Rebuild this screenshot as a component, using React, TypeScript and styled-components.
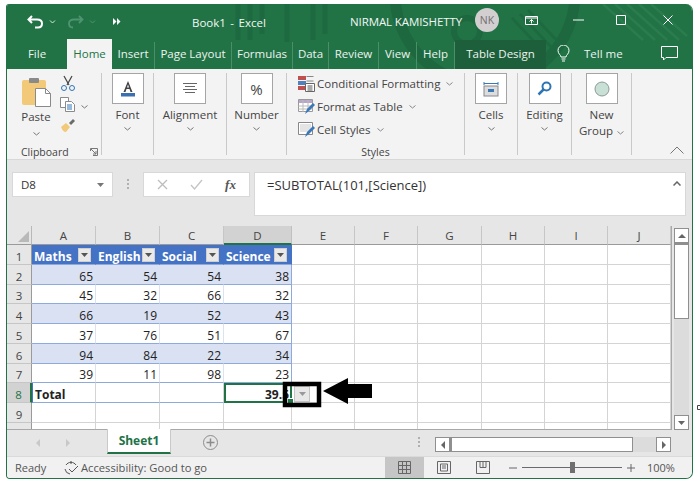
import React from "react";
import styled, { createGlobalStyle } from "styled-components";

const Global = createGlobalStyle`
  html, body { margin: 0; padding: 0; background: #fff; width: 700px; height: 483px; overflow: hidden; }
  * { box-sizing: border-box; }
`;

const Page = styled.div`
  position: relative;
  width: 700px;
  height: 483px;
  padding: 4px 7px 4px 6px;
  font-family: "Open Sans", "Noto Sans", sans-serif;
  color: #333;
`;
const Win = styled.div`
  width: 100%;
  height: 100%;
  display: flex;
  flex-direction: column;
  border: 1px solid #217346;
  border-top: none;
  border-radius: 3px 7px 7px 4px;
  overflow: hidden;
  background: #e6e6e6;
`;
const TopBand = styled.div`
  position: relative;
  background: #217346;
  height: 65px;
  flex: none;
  color: #fff;
  display: flex;
  flex-direction: column;
`;
const Pattern = styled.svg`
  position: absolute;
  left: 0;
  top: 0;
  pointer-events: none;
`;
const TitleRow = styled.div`
  position: relative;
  height: 35px;
  display: flex;
  align-items: center;
  padding-left: 20px;
`;
const Quick = styled.div`
  width: 165px;
  display: flex;
  align-items: center;
  gap: 5px;
`;
const BookTitle = styled.div`
  width: 158px;
  font-size: 11.5px;
  color: #f2f7f4;
  word-spacing: 1.5px;
  margin-top: 2px;
`;
const UserName = styled.div`
  width: 125px;
  font-size: 11.5px;
  color: #f2f7f4;
  letter-spacing: -0.1px;
`;
const Avatar = styled.div`
  width: 24px;
  height: 24px;
  border-radius: 50%;
  background: #d3cfd0;
  color: #707070;
  font-size: 10.5px;
  display: flex;
  align-items: center;
  justify-content: center;
  margin-right: 26px;
  margin-top: -3px;
`;
const WinButtons = styled.div`
  display: flex;
  align-items: center;
  gap: 32px;
  margin-top: -3px;
`;
const TabRow = styled.div`
  position: relative;
  height: 30px;
  display: flex;
  align-items: flex-end;
`;
const Tab = styled.div<{ $w: number; $active?: boolean; $contextual?: boolean; $sep?: boolean }>`
  width: ${(p) => p.$w}px;
  height: ${(p) => (p.$active ? 30 : p.$contextual ? 29 : 27)}px;
  flex: none;
  font-size: 11.5px;
  display: flex;
  align-items: center;
  justify-content: center;
  padding-bottom: ${(p) => (p.$active ? 1 : p.$contextual ? 2 : 4)}px;
  background: ${(p) => (p.$active ? "#f3f3f3" : p.$contextual ? "#1c5f3a" : "transparent")};
  color: ${(p) => (p.$active ? "#217346" : "#edf4f0")};
  border-right: ${(p) => (p.$sep ? "1px solid #4b8f6a" : "none")};
`;
const TellMe = styled.div`
  display: flex;
  align-items: center;
  gap: 14px;
  font-size: 11.5px;
  color: #edf4f0;
  height: 30px;
  padding-left: 11px;
  padding-bottom: 1px;
  width: 115px;
`;
const CommentBtn = styled.div`
  height: 30px;
  display: flex;
  align-items: center;
  padding-bottom: 1px;
`;

const Ribbon = styled.div`
  height: 91px;
  flex: none;
  background: #f3f3f3;
  border-bottom: 1px solid #d8d8d8;
  display: flex;
  padding-top: 4px;
  position: relative;
`;
const Group = styled.div<{ $w: number; $end?: boolean }>`
  width: ${(p) => p.$w}px;
  flex: none;
  height: 82px;
  border-right: ${(p) => (p.$end ? "none" : "1px solid #c9c9c9")};
  display: flex;
  flex-direction: column;
  align-items: center;
  position: relative;
`;
const BoxIcon = styled.div`
  width: 32px;
  height: 31px;
  background: #fff;
  border: 1px solid #a5a5a5;
  display: flex;
  align-items: center;
  justify-content: center;
  flex: none;
  font-size: 15px;
  color: #444;
`;
const BigLabel = styled.div`
  font-size: 11.5px;
  line-height: 16px;
  margin-top: 3px;
  text-align: center;
  color: #444;
`;
const Chev = styled.svg`
  display: block;
  margin-top: 4px;
`;
const ClipboardBody = styled.div`
  display: flex;
  width: 100%;
  height: 66px;
  padding-left: 10px;
`;
const PasteCol = styled.div`
  width: 38px;
  display: flex;
  flex-direction: column;
  align-items: center;
  padding-top: 5px;
`;
const PasteLabel = styled.div`
  font-size: 11.5px;
  line-height: 14px;
  color: #444;
  margin-top: 2px;
  margin-bottom: 4px;
`;
const SmallCol = styled.div`
  display: flex;
  flex-direction: column;
  gap: 6px;
  padding-top: 2px;
  margin-left: 5px;
`;
const CopyRow = styled.div`
  display: flex;
  align-items: center;
  gap: 6px;
`;
const GroupFoot = styled.div<{ $pad?: boolean }>`
  position: absolute;
  left: 0;
  right: 0;
  bottom: -6px;
  height: 17px;
  font-size: 10.5px;
  line-height: 17px;
  color: #444;
  text-align: center;
  display: flex;
  justify-content: ${(p) => (p.$pad ? "flex-start" : "center")};
  padding-left: ${(p) => (p.$pad ? 14 : 0)}px;
`;
const Launcher = styled.svg`
  position: absolute;
  right: 3px;
  top: 4px;
`;
const StyleList = styled.div`
  display: flex;
  flex-direction: column;
  align-items: flex-start;
  gap: 0;
  width: 100%;
  padding-left: 11px;
  margin-top: -1px;
`;
const StyleRow = styled.div`
  display: flex;
  align-items: center;
  height: 23px;
  gap: 2px;
  font-size: 11.5px;
  color: #444;
  white-space: nowrap;
`;
const Collapse = styled.svg`
  position: absolute;
  right: 2px;
  bottom: 1px;
`;

const FormulaBand = styled.div`
  height: 66px;
  flex: none;
  display: flex;
  padding: 12px 6px 0 5px;
  align-items: flex-start;
  background: #e6e6e6;
`;
const NameBox = styled.div`
  width: 101px;
  height: 25px;
  background: #fff;
  border: 1px solid #d8d8d8;
  font-size: 11.5px;
  display: flex;
  align-items: center;
  justify-content: space-between;
  padding: 0 8px;
`;
const Dots = styled.div`
  width: 30px;
  height: 25px;
  display: flex;
  align-items: center;
  justify-content: center;
`;
const FxBox = styled.div`
  width: 107px;
  height: 25px;
  background: #fff;
  border: 1px solid #d8d8d8;
  display: flex;
  align-items: center;
  justify-content: space-around;
  padding: 0 2px;
  margin-right: 4px;
`;
const FxText = styled.span`
  font-family: "Liberation Serif", serif;
  font-style: italic;
  font-size: 13px;
  font-weight: 700;
  color: #555;
`;
const FormulaInput = styled.div`
  flex: 1;
  height: 44px;
  background: #fff;
  border: 1px solid #d8d8d8;
  font-size: 13px;
  line-height: 16px;
  padding: 4px 12px;
  position: relative;
  color: #333;
`;
const FormulaUp = styled.svg`
  position: absolute;
  right: 4px;
  top: 8px;
`;

const SheetRow = styled.div`
  height: 204px;
  flex: none;
  display: flex;
  background: #e6e6e6;
`;
const Grid = styled.div`
  width: 665px;
  display: grid;
  grid-template-columns: 25px 64px 64px 64px 68px 63px 63px 64px 63px 63px 63px;
  grid-template-rows: 19px 20px 20px 19px 20px 20px 20px 19px 20px 20px 7px;
  background: #fff;
  border-right: 1px solid #a8a8a8;
  border-bottom: 1px solid #a8a8a8;
  overflow: hidden;
`;
const Corner = styled.div`
  background: #e6e6e6;
  border-right: 1px solid #b8b8b8;
  border-bottom: 1px solid #9a9a9a;
  position: relative;
  &::after {
    content: "";
    position: absolute;
    right: 2px;
    bottom: 2px;
    border-style: solid;
    border-width: 0 0 11px 11px;
    border-color: transparent transparent #b9b9b9 transparent;
  }
`;
const ColHead = styled.div<{ $sel?: boolean }>`
  background: ${(p) => (p.$sel ? "#d2d2d2" : "#e6e6e6")};
  border-right: 1px solid ${(p) => (p.$sel ? "#c0c0c0" : "#c6c6c6")};
  border-bottom: ${(p) => (p.$sel ? "2px solid #217346" : "1px solid #9a9a9a")};
  font-size: 11.5px;
  display: flex;
  align-items: center;
  justify-content: center;
  color: #444;
  padding-top: 1px;
`;
const RowHead = styled.div<{ $sel?: boolean }>`
  background: ${(p) => (p.$sel ? "#d2d2d2" : "#e6e6e6")};
  border-right: ${(p) => (p.$sel ? "2px solid #217346" : "1px solid #9a9a9a")};
  border-bottom: 1px solid #c6c6c6;
  font-size: 11.5px;
  display: flex;
  align-items: center;
  justify-content: center;
  color: ${(p) => (p.$sel ? "#217346" : "#444")};
  padding-top: 3px;
`;
const Cell = styled.div<{ $tone?: "head" | "band" | "plain" | "total"; $rightEdge?: boolean }>`
  position: relative;
  font-size: 12px;
  font-weight: ${(p) => (p.$tone === "total" ? 700 : 400)};
  color: #222;
  display: flex;
  align-items: center;
  justify-content: flex-end;
  padding: 3px 2px 0 3px;
  background: ${(p) => (p.$tone === "head" ? "#4472c4" : p.$tone === "band" ? "#d9e1f2" : "#fff")};
  border-right: 1px solid
    ${(p) =>
      p.$tone === "head" ? "#4472c4" : p.$tone === "band" ? "#d9e1f2" : p.$tone === "plain" ? "#dbe3f0" : "#d4d4d4"};
  border-bottom: 1px solid
    ${(p) =>
      p.$tone === "head" || p.$tone === "band" || p.$tone === "plain" || p.$tone === "total"
        ? "#8eaadb"
        : "#d4d4d4"};
  ${(p) => (p.$rightEdge ? "border-right-color: #8eaadb;" : "")}
`;
const HeadCell = styled(Cell)`
  justify-content: space-between;
  color: #fff;
  font-weight: 700;
  padding: 1px 4px 0 2px;
  overflow: hidden;
`;
const HeadText = styled.span`
  position: relative;
  top: 1px;
`;
const TotalLabel = styled(Cell)`
  justify-content: flex-start;
  border-left: 1px solid #4472c4;
  padding-left: 2px;
`;
const ActiveCell = styled.div`
  position: relative;
  font-size: 12px;
  font-weight: 700;
  color: #222;
  display: flex;
  align-items: center;
  justify-content: flex-end;
  padding: 2px 1px 0 0;
  background: #fff;
  border: 2px solid #217346;
  overflow: visible;
  z-index: 2;
  &::after {
    content: "";
    position: absolute;
    right: -4px;
    bottom: -4px;
    width: 5px;
    height: 5px;
    background: #217346;
    border: 1px solid #fff;
  }
`;
const FilterBtn = styled.div`
  width: 13px;
  height: 14px;
  flex: none;
  background: #e9e9e9;
  border: 1px solid #cfcfcf;
  display: flex;
  align-items: center;
  justify-content: center;
`;
const TotalDrop = styled.div`
  position: absolute;
  z-index: 3;
  left: 294px;
  top: 386px;
  width: 16px;
  height: 16px;
  background: #e8e8e8;
  border: 1px solid #c4c4c4;
  display: flex;
  align-items: center;
  justify-content: center;
`;
const Annot = styled.svg`
  position: absolute;
  z-index: 4;
  left: 280px;
  top: 374px;
`;
const EdgeMark = styled.svg`
  position: absolute;
  left: 697px;
  top: 405px;
`;

const VScroll = styled.div`
  width: 16px;
  margin-left: 2px;
  padding-top: 2px;
  display: flex;
  flex-direction: column;
`;
const ScrollBtn = styled.div`
  width: 15px;
  height: 15px;
  background: #fff;
  border: 1px solid #8f8f8f;
  display: flex;
  align-items: center;
  justify-content: center;
  flex: none;
`;
const VThumb = styled.div`
  width: 15px;
  height: 76px;
  background: #fff;
  border: 1px solid #8f8f8f;
  border-top: 2px solid #8f8f8f;
  flex: none;
`;
const VTrack = styled.div`
  flex: 1;
  width: 15px;
  background: #dcdcdc;
`;

const TabsBar = styled.div`
  height: 27px;
  flex: none;
  background: #e6e6e6;
  display: flex;
  align-items: flex-start;
  border-bottom: 1px solid #dadada;
`;
const TabArrows = styled.div`
  width: 100px;
  height: 26px;
  display: flex;
  align-items: center;
  gap: 22px;
  padding-left: 27px;
`;
const SheetTab = styled.div`
  width: 64px;
  height: 25px;
  margin-top: -1px;
  background: #fff;
  border-left: 1px solid #c9c9c9;
  border-right: 1px solid #c9c9c9;
  border-bottom: 2px solid #217346;
  color: #217346;
  font-weight: 700;
  font-size: 12px;
  display: flex;
  align-items: center;
  justify-content: center;
`;
const AddSheet = styled.div`
  margin-left: 32px;
  height: 24px;
  display: flex;
  align-items: center;
`;
const TabsDots = styled.div`
  margin-left: 200px;
  height: 24px;
  display: flex;
  align-items: center;
  width: 17px;
`;
const HScroll = styled.div`
  margin-top: 7px;
  width: 236px;
  height: 15px;
  display: flex;
  background: #dcdcdc;
`;
const HThumb = styled.div`
  width: 183px;
  background: #fff;
  border: 1px solid #8f8f8f;
  border-left-width: 2px;
  flex: none;
`;
const HTrack = styled.div`
  flex: 1;
`;

const Status = styled.div`
  flex: 1;
  background: #f1f1f1;
  display: flex;
  align-items: center;
  font-size: 11px;
  color: #555;
  min-height: 0;
`;
const Ready = styled.div`
  width: 56px;
  padding-left: 8px;
`;
const A11y = styled.div`
  display: flex;
  align-items: center;
  gap: 1px;
  width: 322px;
  font-size: 11.2px;
`;
const ViewBtn = styled.div<{ $on?: boolean }>`
  width: 39px;
  height: 100%;
  display: flex;
  align-items: center;
  justify-content: center;
  background: ${(p) => (p.$on ? "#c6c6c6" : "transparent")};
`;
const ZoomBar = styled.div`
  display: flex;
  align-items: center;
  margin-left: 7px;
  gap: 5px;
  flex: none;
`;
const ZoomTrack = styled.div`
  position: relative;
  width: 100px;
  height: 1px;
  background: #6a6a6a;
`;
const ZoomKnob = styled.div`
  position: absolute;
  left: 48px;
  top: -5px;
  width: 5px;
  height: 11px;
  background: #6f6f6f;
`;
const ZoomText = styled.div`
  margin-left: 7px;
  font-size: 11px;
`;

const ChevDown = ({ c = "#777" }: { c?: string }) => (
  <Chev width="7" height="4" viewBox="0 0 7 4">
    <path d="M.5.5 3.5 3 6.5.5" fill="none" stroke={c} strokeWidth="1" />
  </Chev>
);
const InlineChev = () => (
  <svg width="7" height="4" viewBox="0 0 7 4" fill="none" stroke="#888" style={{ marginLeft: 4 }}>
    <path d="M.5.500 3.500 3 6.500.500" />
  </svg>
);
const Tri = ({ c = "#666", w = 7 }: { c?: string; w?: number }) => (
  <svg width={w} height={w / 2 + 0.5} viewBox="0 0 8 4.5" style={{ display: "block" }}>
    <path d="M0 0h8L4 4.5z" fill={c} />
  </svg>
);
const TriSide = ({ dir, c = "#666" }: { dir: "l" | "r" | "u"; c?: string }) => (
  <svg width="8" height="8" viewBox="0 0 8 8" style={{ display: "block" }}>
    <path d={dir === "l" ? "M6 0v8L2 4z" : dir === "r" ? "M2 0v8l4-4z" : "M0 6h8L4 2z"} fill={c} />
  </svg>
);
const VDots = () => (
  <svg width="3" height="11" viewBox="0 0 3 11" fill="#b0b0b0">
    <path d="M0 0h2v2H0zM0 4h2v2H0zM0 8h2v2H0z" />
  </svg>
);

const tabs: { t: string; w: number; active?: boolean; sep?: boolean }[] = [
  { t: "File", w: 60 },
  { t: "Home", w: 45, active: true },
  { t: "Insert", w: 43, sep: true },
  { t: "Page Layout", w: 77, sep: true },
  { t: "Formulas", w: 61, sep: true },
  { t: "Data", w: 36, sep: true },
  { t: "Review", w: 50, sep: true },
  { t: "View", w: 38, sep: true },
  { t: "Help", w: 38, sep: true },
];

const rows = [
  [65, 54, 54, 38],
  [45, 32, 66, 32],
  [66, 19, 52, 43],
  [37, 76, 51, 67],
  [94, 84, 22, 34],
  [39, 11, 98, 23],
];
const heads = ["Maths", "English", "Social", "Science"];
const cols = ["A", "B", "C", "D", "E", "F", "G", "H", "I", "J"];

export default function App() {
  return (
    <Page>
      <Global />
      <Win>
        <TopBand>
          <Pattern width="686" height="65" viewBox="0 0 686 65" fill="none">
            <g stroke="#1e6a40" strokeWidth="5">
              <path d="M231 0v36M243 0v36M255 0v30M280 0v38M306 0v36M318 0v30" />
            </g>
            <circle cx="460" cy="27" r="13" stroke="#1d683f" strokeWidth="6" />
            <circle cx="478" cy="-10" r="90" stroke="#1d683f" strokeWidth="11" />
            <g stroke="#1e6a40" strokeWidth="3">
              <path d="M505 14l28 30M513 10l32 34M521 6l36 38" />
            </g>
            <g stroke="#2a7c4f" strokeWidth="2.500">
              <path d="M620 0l40 36M632 0l40 36M644 0l36 32M608 0l40 36M596 0l40 36" />
            </g>
          </Pattern>
          <TitleRow>
            <Quick>
              <svg width="17" height="14" viewBox="0 0 17 14" fill="none" stroke="#fff" strokeWidth="2">
                <path d="M5 1 1.500 4.500 5 8M2 4.500h8c3 0 5 1.500 5 4s-1.500 4-4 4H8" />
              </svg>
              <svg width="7" height="4" viewBox="0 0 7 4" fill="none" stroke="#dbe8e0">
                <path d="M1 .5l2.500 2.500L6 .5" />
              </svg>
              <svg width="17" height="14" viewBox="0 0 17 14" fill="none" stroke="#4f9470" strokeWidth="1.800" style={{ marginLeft: 6 }}>
                <path d="M12 1l3.500 3.500L12 8M15 4.500H7c-3 0-5 1.500-5 4s1.500 4 4 4" />
              </svg>
              <svg width="7" height="4" viewBox="0 0 7 4" fill="none" stroke="#4f9470">
                <path d="M1 .5l2.500 2.500L6 .5" />
              </svg>
              <svg width="8" height="7" viewBox="0 0 8 7" fill="#fff" style={{ marginLeft: 12 }}>
                <path d="M0 0l3.500 3.500L0 7zM4 0l3.500 3.500L4 7z" />
              </svg>
            </Quick>
            <BookTitle>Book1 - Excel</BookTitle>
            <UserName>NIRMAL KAMISHETTY</UserName>
            <Avatar>NK</Avatar>
            <WinButtons>
              <svg width="13" height="11" viewBox="0 0 13 11" fill="none" stroke="#fff">
                <path d="M.5 1.500h12v8H.5zM.5 3h12M6.500 8.500V4.500M4.500 6.500l2-2 2 2" />
              </svg>
              <svg width="11" height="2" viewBox="0 0 11 2" stroke="#fff" style={{ marginLeft: 3 }}>
                <path d="M0 1h11" />
              </svg>
              <svg width="10" height="10" viewBox="0 0 10 10" fill="none" stroke="#fff">
                <path d="M.5.500h9v9h-9z" />
              </svg>
              <svg width="10" height="10" viewBox="0 0 10 10" fill="none" stroke="#fff" style={{ marginLeft: 5 }}>
                <path d="M.5.500l9 9M9.500.500l-9 9" />
              </svg>
            </WinButtons>
          </TitleRow>
          <TabRow>
            {tabs.map((t) => (
              <Tab key={t.t} $w={t.w} $active={t.active} $sep={t.sep}>
                {t.t}
              </Tab>
            ))}
            <Tab $w={91} $contextual>
              Table Design
            </Tab>
            <TellMe>
              <svg width="13" height="17" viewBox="0 0 13 17" fill="none" stroke="#fff">
                <path d="M4 12c0-2-3-3-3-6.500a5.500 5.500 0 0 1 11 0C12 9 9 10 9 12zM4.500 14h4M5 16h3" />
              </svg>
              Tell me
            </TellMe>
            <CommentBtn>
              <svg width="17" height="15" viewBox="0 0 17 15" fill="none" stroke="#fff">
                <path d="M.5.500h16v11H5l-2.500 2.500v-2.500h-2z" />
              </svg>
            </CommentBtn>
          </TabRow>
        </TopBand>
        <Ribbon>
          <Group $w={95}>
            <ClipboardBody>
              <PasteCol>
                <svg width="30" height="30" viewBox="0 0 30 30">
                  <rect x="1" y="2" width="24" height="25" rx="2" fill="#f2c879" />
                  <rect x="8" y="0" width="10" height="5" rx="1" fill="#8a8a8a" />
                  <path d="M14.500 10.500h10l5 5v13h-15z" fill="#fff" stroke="#8a8a8a" />
                  <path d="M24.500 10.500v5h5" fill="none" stroke="#8a8a8a" />
                </svg>
                <PasteLabel>Paste</PasteLabel>
                <ChevDown />
              </PasteCol>
              <SmallCol>
                <svg width="16" height="16" viewBox="0 0 16 16" fill="none" stroke="#4a4a4a">
                  <path d="M4 1l5 9M12 1L7 10" strokeWidth="1.300" />
                  <circle cx="4" cy="13" r="2.500" stroke="#2e75b6" />
                  <circle cx="12" cy="13" r="2.500" stroke="#2e75b6" />
                </svg>
                <CopyRow>
                  <svg width="15" height="15" viewBox="0 0 15 15" fill="#fff" stroke="#8a8a8a">
                    <path d="M.5.500h8v10h-8z" />
                    <path d="M5.500 4.500h6l3 3v7h-9z" />
                    <path d="M7 8h5M7 10h5M7 12h5" stroke="#2e75b6" />
                  </svg>
                  <ChevDown />
                </CopyRow>
                <svg width="16" height="15" viewBox="0 0 16 15">
                  <path d="M1 9l5-4 4 4-4 5c-2 0-4-2-5-5z" fill="#f2c879" />
                  <path d="M9 5l4-4 2 2-4 4z" fill="#6b6b6b" />
                </svg>
              </SmallCol>
            </ClipboardBody>
            <GroupFoot $pad>
              Clipboard
              <Launcher width="8" height="8" viewBox="0 0 8 8" fill="none" stroke="#777">
                <path d="M.5 3V.500H7.500V7.500H3M1 1l5 5M3 6h3V3" />
              </Launcher>
            </GroupFoot>
          </Group>
          <Group $w={52}>
            <BoxIcon>
              <svg width="16" height="17" viewBox="0 0 16 17">
                <path d="M8 1 3.500 12h2l1-3h3l1 3h2zM7 7.500l1-3 1 3z" fill="#444" fillRule="evenodd" />
                <rect x="1" y="13" width="14" height="3.500" fill="#3a6fb0" />
              </svg>
            </BoxIcon>
            <BigLabel>Font</BigLabel>
            <ChevDown />
          </Group>
          <Group $w={73}>
            <BoxIcon>
              <svg width="14" height="11" viewBox="0 0 14 11" stroke="#666">
                <path d="M0 .5h14M2 3.500h10M0 6.500h14M2 9.500h10" />
              </svg>
            </BoxIcon>
            <BigLabel>Alignment</BigLabel>
            <ChevDown />
          </Group>
          <Group $w={60}>
            <BoxIcon>%</BoxIcon>
            <BigLabel>Number</BigLabel>
            <ChevDown />
          </Group>
          <Group $w={178}>
            <StyleList>
              <StyleRow>
                <svg width="17" height="16" viewBox="0 0 17 16">
                  <rect x="0" y="0" width="8" height="4" fill="#c0504d" />
                  <rect x="0" y="5" width="8" height="4" fill="#4f81bd" />
                  <rect x="0" y="10" width="8" height="4" fill="#c0504d" />
                  <path d="M8.500.500h7M8.500 5h7M8.500 9.500h7" stroke="#888" />
                  <path d="M7.500 7.500h9v8h-9z" fill="#fff" stroke="#666" />
                  <path d="M9.500 10h5M9.500 12h5M9.500 14h5" stroke="#555" />
                </svg>
                Conditional Formatting
                <InlineChev />
              </StyleRow>
              <StyleRow>
                <svg width="17" height="16" viewBox="0 0 17 16">
                  <path d="M.5.500h14v12H.5z" fill="#fff" stroke="#999" />
                  <rect x="1" y="1" width="13" height="3" fill="#b7a6c9" />
                  <path d="M.5 7h14M.5 10h14M5 1v12M10 1v12" stroke="#bbb" />
                  <path d="M7 15l2-5 6-6 2 2-6 6z" fill="#3a78b8" />
                </svg>
                Format as Table
                <InlineChev />
              </StyleRow>
              <StyleRow>
                <svg width="17" height="16" viewBox="0 0 17 16">
                  <path d="M.5.500h14v12H.5z" fill="#fff" stroke="#888" />
                  <rect x="2" y="2" width="11" height="8" fill="#e4e4e4" />
                  <path d="M7 15l2-5 6-6 2 2-6 6z" fill="#3a78b8" />
                </svg>
                Cell Styles
                <InlineChev />
              </StyleRow>
            </StyleList>
            <GroupFoot>Styles</GroupFoot>
          </Group>
          <Group $w={53}>
            <BoxIcon>
              <svg width="16" height="16" viewBox="0 0 16 16">
                <path d="M1 1v3M15 1v3M1 2.500h14" stroke="#3a78b8" fill="none" />
                <rect x="1" y="5" width="14" height="10" fill="#ddd" stroke="#888" />
                <rect x="5" y="8" width="6" height="3" fill="#3a78b8" />
              </svg>
            </BoxIcon>
            <BigLabel>Cells</BigLabel>
            <ChevDown />
          </Group>
          <Group $w={54}>
            <BoxIcon>
              <svg width="15" height="15" viewBox="0 0 15 15" fill="none" stroke="#2e75b6" strokeWidth="2">
                <circle cx="9.500" cy="5.500" r="4" />
                <path d="M6.500 8.500 1.500 13.500" strokeWidth="2.500" />
              </svg>
            </BoxIcon>
            <BigLabel>Editing</BigLabel>
            <ChevDown />
          </Group>
          <Group $w={60}>
            <BoxIcon>
              <svg width="16" height="16" viewBox="0 0 16 16">
                <circle cx="8" cy="8" r="7" fill="#c9e0d6" stroke="#8a9a94" />
              </svg>
            </BoxIcon>
            <BigLabel>
              New
              <br />
              Group
              <InlineChev />
            </BigLabel>
          </Group>
          <Group $w={54} $end>
            <Collapse width="14" height="8" viewBox="0 0 14 8" fill="none" stroke="#777">
              <path d="M.5 7.500 7 1l6.500 6.500" />
            </Collapse>
          </Group>
        </Ribbon>
        <FormulaBand>
          <NameBox>
            D8
            <Tri c="#777" />
          </NameBox>
          <Dots>
            <VDots />
          </Dots>
          <FxBox>
            <svg width="11" height="11" viewBox="0 0 11 11" fill="none" stroke="#bdbdbd" strokeWidth="1.300">
              <path d="M1 1l9 9M10 1l-9 9" />
            </svg>
            <svg width="13" height="11" viewBox="0 0 13 11" fill="none" stroke="#c4c4c4" strokeWidth="1.300">
              <path d="M1 6l3.500 4L12 1" />
            </svg>
            <FxText>fx</FxText>
          </FxBox>
          <FormulaInput>
            =SUBTOTAL(101,[Science])
            <FormulaUp width="8" height="5" viewBox="0 0 8 5" fill="none" stroke="#666" strokeWidth="1.500">
              <path d="M.5 4.500 4 1l3.500 3.500" />
            </FormulaUp>
          </FormulaInput>
        </FormulaBand>
        <SheetRow>
          <Grid>
            <Corner />
            {cols.map((c) => (
              <ColHead key={c} $sel={c === "D"}>
                {c}
              </ColHead>
            ))}
            <RowHead>1</RowHead>
            {heads.map((h) => (
              <HeadCell key={h} $tone="head">
                <HeadText>{h}</HeadText>
                <FilterBtn>
                  <Tri c="#555" />
                </FilterBtn>
              </HeadCell>
            ))}
            {cols.slice(4).map((c) => (
              <Cell key={c} />
            ))}
            {rows.map((r, i) => (
              <React.Fragment key={i}>
                <RowHead>{i + 2}</RowHead>
                {r.map((v, j) => (
                  <Cell key={j} $tone={i % 2 === 0 ? "band" : "plain"} $rightEdge={j === 3}>
                    {v}
                  </Cell>
                ))}
                {cols.slice(4).map((c) => (
                  <Cell key={c} />
                ))}
              </React.Fragment>
            ))}
            <RowHead $sel>8</RowHead>
            <TotalLabel $tone="total">Total</TotalLabel>
            <Cell $tone="total" />
            <Cell $tone="total" />
            <ActiveCell>39.5</ActiveCell>
            {cols.slice(4).map((c) => (
              <Cell key={c} />
            ))}
            {[9, 10].map((n) => (
              <React.Fragment key={n}>
                <RowHead>{n === 9 ? 9 : ""}</RowHead>
                {cols.map((c) => (
                  <Cell key={c} />
                ))}
              </React.Fragment>
            ))}
          </Grid>
          <VScroll>
            <ScrollBtn>
              <TriSide dir="u" />
            </ScrollBtn>
            <VThumb />
            <VTrack />
            <ScrollBtn>
              <Tri />
            </ScrollBtn>
          </VScroll>
        </SheetRow>
        <TabsBar>
          <TabArrows>
            <TriSide dir="l" c="#c8c8c8" />
            <TriSide dir="r" c="#c8c8c8" />
          </TabArrows>
          <SheetTab>Sheet1</SheetTab>
          <AddSheet>
            <svg width="15" height="15" viewBox="0 0 15 15" fill="none" stroke="#8c8c8c">
              <circle cx="7.500" cy="7.500" r="7" />
              <path d="M7.500 3.500v8M3.500 7.500h8" strokeWidth="1.500" />
            </svg>
          </AddSheet>
          <TabsDots>
            <VDots />
          </TabsDots>
          <HScroll>
            <ScrollBtn>
              <TriSide dir="l" />
            </ScrollBtn>
            <HThumb />
            <HTrack />
            <ScrollBtn>
              <TriSide dir="r" />
            </ScrollBtn>
          </HScroll>
        </TabsBar>
        <Status>
          <Ready>Ready</Ready>
          <A11y>
            <svg width="17" height="15" viewBox="0 0 17 15" fill="none" stroke="#555">
              <path d="M3 5a6 6 0 0 1 10 0M2 9a6 6 0 0 0 5 5M8 1v3M6 9l3 3 6-6" />
            </svg>
            Accessibility: Good to go
          </A11y>
          <ViewBtn $on>
            <svg width="13" height="13" viewBox="0 0 13 13" fill="none" stroke="#666">
              <path d="M.5.500h12v12H.5zM.5 4.500h12M.5 8.500h12M4.500.500v12M8.500.500v12" />
            </svg>
          </ViewBtn>
          <ViewBtn>
            <svg width="14" height="13" viewBox="0 0 14 13" fill="none" stroke="#666">
              <path d="M.5.500h13v12H.5zM3.500 3h7v7h-7zM5 5h4M5 7h4" />
            </svg>
          </ViewBtn>
          <ViewBtn>
            <svg width="14" height="13" viewBox="0 0 14 13" fill="none" stroke="#666">
              <path d="M.5.500h13v12H.5zM4 .5v6h6v-6M7 .5v6" />
            </svg>
          </ViewBtn>
          <ZoomBar>
            <svg width="8" height="2" viewBox="0 0 8 2" stroke="#666">
              <path d="M0 1h8" />
            </svg>
            <ZoomTrack>
              <ZoomKnob />
            </ZoomTrack>
            <svg width="8" height="8" viewBox="0 0 8 8" stroke="#666">
              <path d="M0 4h8M4 0v8" />
            </svg>
            <ZoomText>100%</ZoomText>
          </ZoomBar>
        </Status>
      </Win>
      <TotalDrop>
        <Tri c="#999" />
      </TotalDrop>
      <Annot width="96" height="36" viewBox="0 0 96 36">
        <rect x="5" y="10" width="34" height="21" fill="none" stroke="#000" strokeWidth="4.500" />
        <path d="M43 17 68 4v6h24v14H68v6z" fill="#000" />
      </Annot>
      <EdgeMark width="3" height="5" viewBox="0 0 3 5" fill="none" stroke="#444">
        <path d="M3 .5H.5v4H3" />
      </EdgeMark>
    </Page>
  );
}
